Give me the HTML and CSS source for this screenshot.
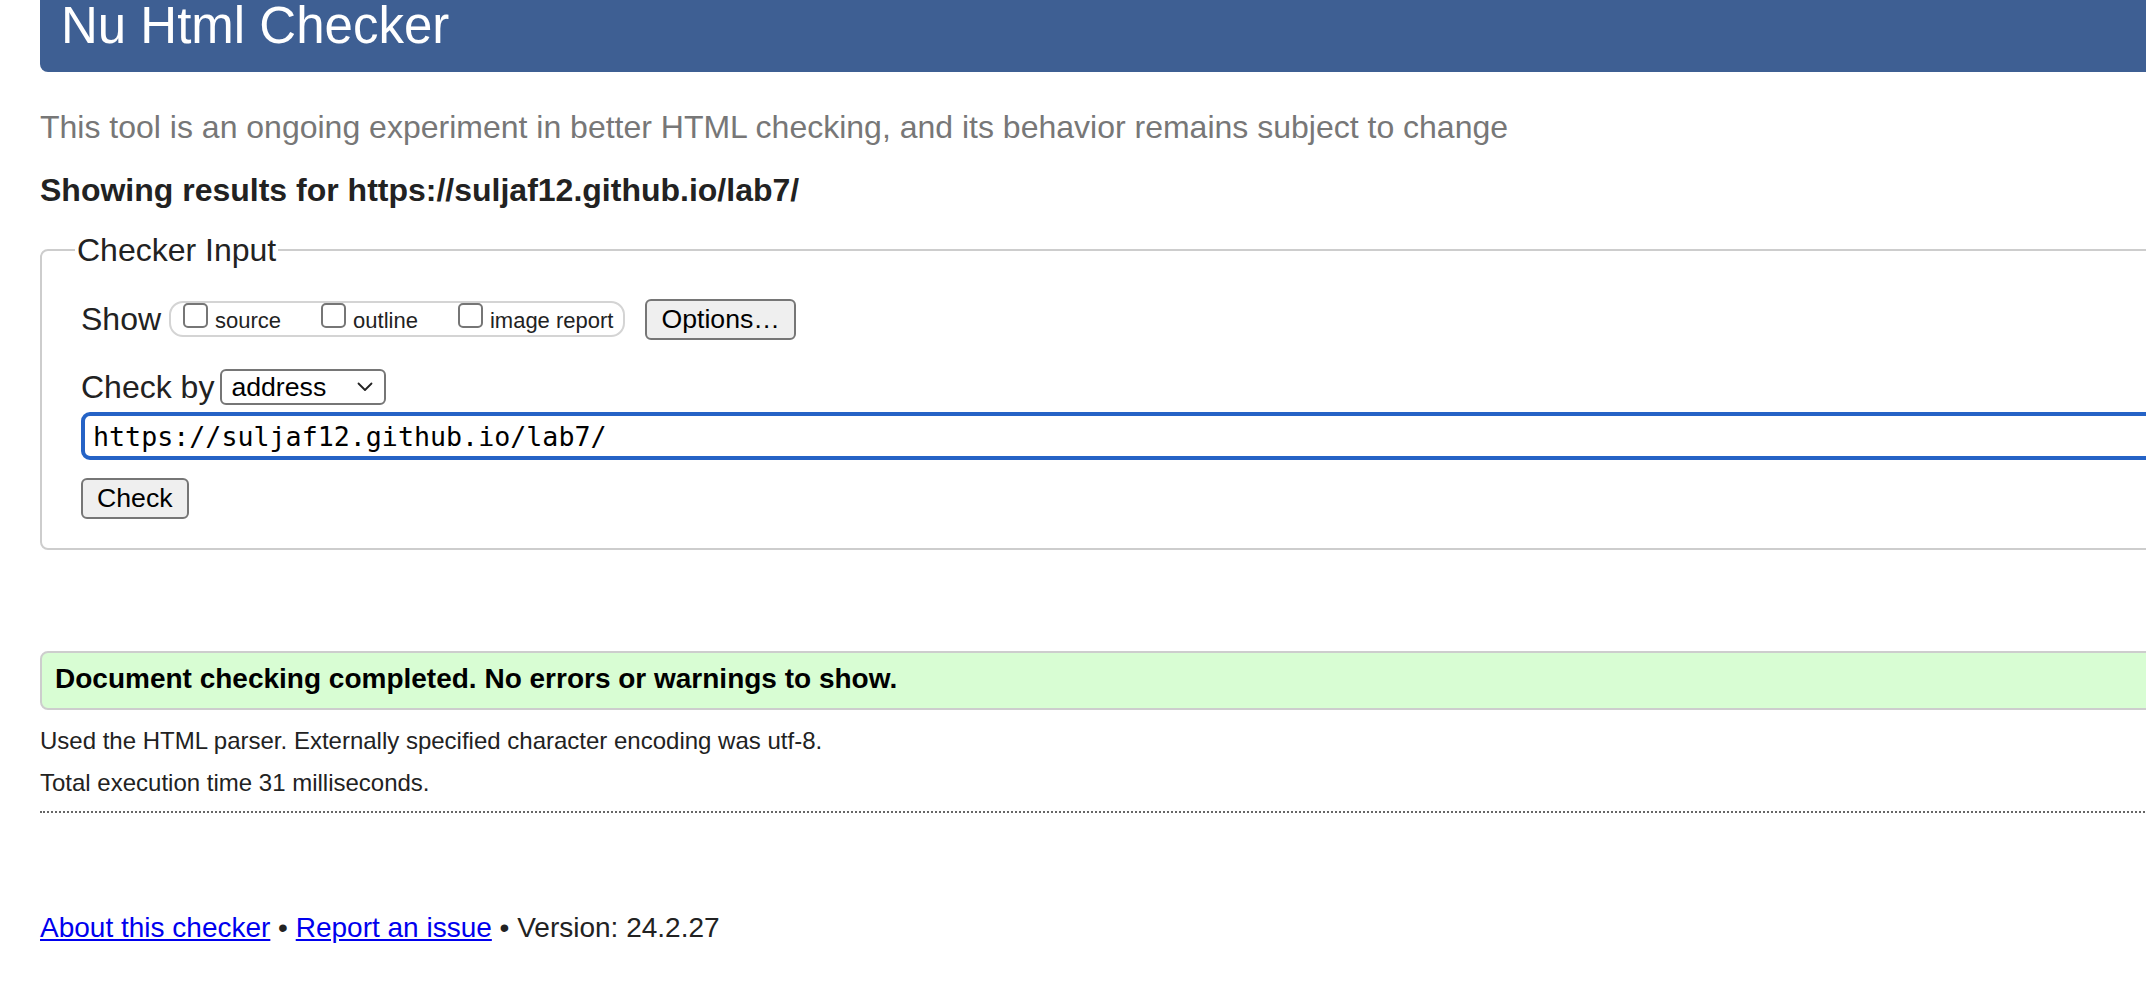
FILE: index.html
```html
<!DOCTYPE html>
<html lang="en">
<head>
<meta charset="utf-8">
<title>Showing results for https://suljaf12.github.io/lab7/ - Nu Html Checker</title>
<link rel="stylesheet" href="styles.css">
</head>
<body>
<div class="page">
  <header class="masthead"><h1>Nu Html Checker</h1></header>
  <p class="tagline">This tool is an ongoing experiment in better HTML checking, and its behavior remains subject to change</p>
  <h2 class="results-for">Showing results for https://suljaf12.github.io/lab7/</h2>
  <fieldset class="input-box">
    <legend>Checker Input</legend>
    <div class="show-row">
      <span class="row-label">Show</span>
      <span class="toggles">
        <label class="toggle"><input type="checkbox" class="cb"><span class="toggle-text">source</span></label>
        <label class="toggle"><input type="checkbox" class="cb"><span class="toggle-text">outline</span></label>
        <label class="toggle"><input type="checkbox" class="cb"><span class="toggle-text">image report</span></label>
      </span>
      <button class="btn options" type="button">Options…</button>
    </div>
    <div class="by-row">
      <span class="row-label">Check by</span>
      <span class="select"><span>address</span><svg class="chev" width="16" height="10" viewBox="0 0 16 10"><path d="M1.5 1.5 L8 8 L14.5 1.5" fill="none" stroke="#222" stroke-width="1.8" stroke-linecap="round" stroke-linejoin="round"/></svg></span>
    </div>
    <input class="url" type="text" value="https://suljaf12.github.io/lab7/">
    <button class="btn check" type="button">Check</button>
  </fieldset>
  <div class="status">Document checking completed. No errors or warnings to show.</div>
  <p class="meta">Used the HTML parser. Externally specified character encoding was utf-8.</p>
  <p class="meta second">Total execution time 31 milliseconds.</p>
  <hr class="rule">
  <p class="footer"><a href="#">About this checker</a> • <a href="#">Report an issue</a> • Version: 24.2.27</p>
</div>
</body>
</html>
```

FILE: styles.css
```css
html, body {
  margin: 0;
  padding: 0;
  background: #fff;
  overflow: hidden;
}

body {
  font-family: "Liberation Sans", Arial, Helvetica, sans-serif;
  color: #222;
}

.page {
  width: 2400px;
  padding-left: 40px;
  box-sizing: border-box;
}

.masthead {
  height: 72px;
  background: #3e5f93;
  border-radius: 0 0 8px 8px;
}

.masthead h1 {
  margin: 0;
  padding-left: 21px;
  font-size: 51px;
  font-weight: normal;
  line-height: 51px;
  color: #fff;
}

.tagline {
  margin: 35px 0 0;
  font-size: 32px;
  line-height: 40px;
  color: #777;
}

.results-for {
  margin: 23px 0 0;
  font-size: 32px;
  line-height: 40px;
  font-weight: bold;
  color: #222;
}

.input-box {
  margin: 20px 0 0;
  padding: 29px 39px 29px;
  border: 2px solid #cdcdcd;
  border-radius: 8px;
  min-width: 0;
}

.input-box legend {
  margin-left: -6px;
  padding: 0 2px;
  font-size: 32px;
  line-height: 40px;
  color: #222;
}

.row-label {
  font-size: 32px;
  line-height: 40px;
}

.show-row {
  display: flex;
  align-items: center;
  height: 40px;
}

.toggles {
  display: flex;
  align-items: flex-start;
  height: 36px;
  box-sizing: border-box;
  margin-left: 8px;
  padding: 0 10px 0 12px;
  border: 2px solid #d4d4d4;
  border-radius: 14px;
}

.toggle {
  display: flex;
  align-items: flex-start;
  margin-right: 40px;
}

.toggle:last-child {
  margin-right: 0;
}

.cb {
  appearance: none;
  -webkit-appearance: none;
  margin: 0 7px 0 0;
  width: 25px;
  height: 25px;
  box-sizing: border-box;
  border: 2px solid #767676;
  border-radius: 5px;
  background: #fff;
}

.toggle-text {
  margin-top: 4px;
  font-size: 22px;
  line-height: 28px;
  color: #222;
}

.btn {
  appearance: none;
  -webkit-appearance: none;
  margin: 0;
  height: 41px;
  padding: 0 14px;
  font-family: "Liberation Sans", Arial, Helvetica, sans-serif;
  font-size: 26.67px;
  color: #000;
  background: #efefef;
  border: 2px solid #767676;
  border-radius: 6px;
}

.options {
  margin-left: 20px;
}

.by-row {
  display: flex;
  align-items: center;
  margin-top: 28px;
}

.select {
  display: flex;
  align-items: center;
  justify-content: space-between;
  width: 166px;
  height: 36px;
  box-sizing: border-box;
  margin-left: 6px;
  padding: 0 11px 0 9px;
  border: 2px solid #767676;
  border-radius: 6px;
  font-size: 26.67px;
  color: #000;
}

.url {
  appearance: none;
  -webkit-appearance: none;
  display: block;
  width: 100%;
  margin: 5px 0 0;
  height: 48px;
  box-sizing: border-box;
  border: 4px solid #2563c6;
  border-radius: 9px;
  padding: 0 8px;
  font-family: "DejaVu Sans Mono", "Liberation Mono", monospace;
  font-size: 26.67px;
  color: #000;
  background: #fff;
  outline: none;
}

.check {
  display: block;
  margin-top: 18px;
}

.status {
  margin-top: 101px;
  height: 59px;
  box-sizing: border-box;
  padding: 0 13px;
  border: 2px solid #cdcdcd;
  border-radius: 8px;
  background: #d8fdd3;
  font-size: 28px;
  font-weight: bold;
  line-height: 51px;
  color: #000;
}

.meta {
  margin: 16px 0 0;
  font-size: 24px;
  line-height: 30px;
  color: #222;
}

.meta.second {
  margin-top: 12px;
}

.rule {
  margin: 13px 0 0;
  height: 0;
  border: 0;
  border-top: 2px dotted #666;
}

.footer {
  margin: 97px 0 0;
  font-size: 28px;
  line-height: 36px;
  color: #222;
}

.footer a {
  color: #0000ee;
  text-decoration: underline;
}
```
